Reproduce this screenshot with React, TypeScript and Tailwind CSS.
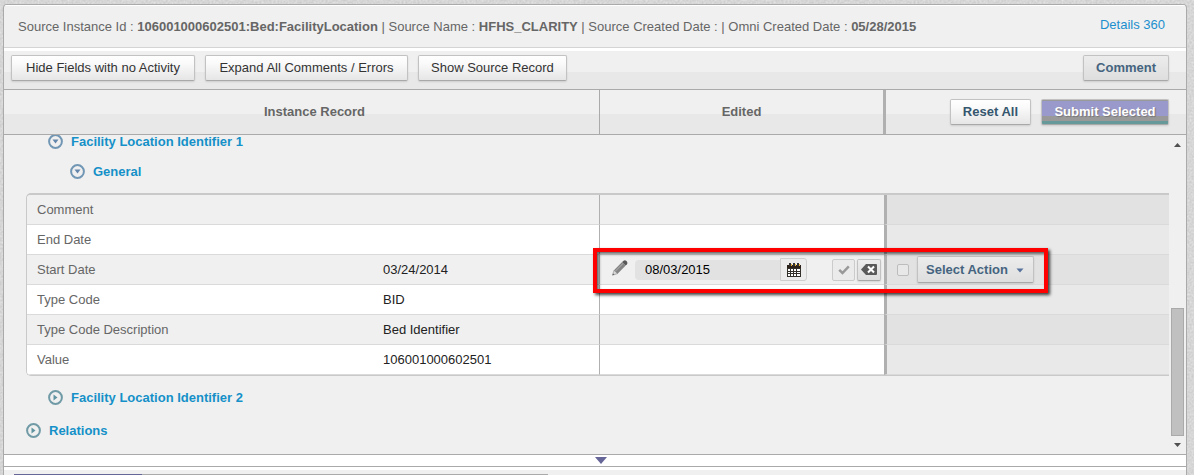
import React from 'react'
import clsx from 'clsx'

type Field = {
  label: string
  value?: string
  edited?: string
}

const fields: Field[] = [
  { label: 'Comment' },
  { label: 'End Date' },
  { label: 'Start Date', value: '03/24/2014', edited: '08/03/2015' },
  { label: 'Type Code', value: 'BID' },
  { label: 'Type Code Description', value: 'Bed Identifier' },
  { label: 'Value', value: '106001000602501' },
]

const raised =
  'rounded-[2px] border border-[#c2c2c2] border-b-[#a8a8a8] shadow-[0_1px_2px_rgba(0,0,0,0.12)]'
const whiteFace = 'bg-[linear-gradient(#ffffff_0%,#fafafa_30%,#e6e6e6_100%)]'
const grayFace = 'bg-[linear-gradient(#ececec,#dedede)]'
const barFace = 'bg-[linear-gradient(#f0f0f0_0%,#f0f0f0_54%,#e8e8e8_54%,#e8e8e8_100%)]'

function ToolbarButton({ children, className }: { children: React.ReactNode; className?: string }) {
  return (
    <button type="button" className={clsx('h-[26px] px-3 pb-0.5 text-[13px] leading-none whitespace-nowrap', raised, className)}>
      {children}
    </button>
  )
}

function SectionToggle({ label, open, className }: { label: string; open?: boolean; className?: string }) {
  return (
    <button
      type="button"
      aria-expanded={!!open}
      className={clsx('flex h-[30px] items-center gap-2 text-[13px] font-bold text-[#1590c8]', className)}
    >
      <svg width="15" height="15" viewBox="0 0 15 15" fill="none" className="mb-px">
        <circle cx="7.5" cy="7.5" r="6.4" stroke={open ? '#7297b5' : '#6f9aa6'} strokeWidth="2" />
        {open ? <path d="M4.5 5.5h6l-3 4z" fill="#6486ab" /> : <path d="M5.5 4.5v6l4-3z" fill="#5f93a0" />}
      </svg>
      {label}
    </button>
  )
}

function PencilIcon() {
  return (
    <svg width="16" height="16" viewBox="0 0 16 16">
      <path d="M0.5 15.2 2 10.2 5.6 13.6z" fill="#d8d8d8" stroke="#8a8a8a" strokeWidth="0.6" />
      <path d="M0.5 15.2 1.1 13.4 2.3 14.5z" fill="#555" />
      <path d="M2 10.2 10.1 2.1 13.7 5.6 5.6 13.7z" fill="#848484" />
      <path d="M3.3 11.2 11.3 3.2" stroke="#b4b4b4" strokeWidth="1" />
      <path d="M10.1 2.1 11.6 0.7Q13 -0.2 14.5 1.1 16 2.6 15 4.2L13.7 5.6z" fill="#595959" />
    </svg>
  )
}

function CalendarIcon() {
  return (
    <svg width="14" height="14" viewBox="0 0 14 14">
      <path d="M0 2h14v12H0z" fill="#33302c" />
      <path d="M0 2h14v3H0z" fill="#2b2118" />
      <path d="M2 0h2v3H2zM6 0h2v3H6zM10 0h2v3h-2z" fill="#333" />
      <path d="M4 1h1v2H4zM8 1h1v2H8zM12 1h1v2h-1z" fill="#e9b23a" />
      <path
        d="M1 6h2v2H1zM4 6h2v2H4zM7 6h2v2H7zM10 6h3v2h-3zM1 9h2v1H1zM4 9h2v1H4zM7 9h2v1H7zM10 9h3v1h-3zM1 11h2v2H1zM4 11h2v2H4zM7 11h2v2H7zM10 11h3v2h-3z"
        fill="#fff"
      />
    </svg>
  )
}

function EditedDate({ value }: { value: string }) {
  return (
    <div className="flex items-center pr-[3px] pl-3">
      <button type="button" aria-label="Edit start date" className="mr-[7px] -mt-1">
        <PencilIcon />
      </button>
      <input
        type="text"
        aria-label="Edited start date"
        defaultValue={value}
        className="h-5 min-w-0 flex-1 rounded-l bg-[#e2e2e2] pl-2.5 text-[13px] text-black outline-none"
      />
      <button
        type="button"
        aria-label="Pick a date"
        className="mr-[25px] flex h-[23px] w-[27px] items-center justify-center rounded-r-[3px] border border-[#cfcfcf] bg-[#ececec]"
      >
        <CalendarIcon />
      </button>
      <button
        type="button"
        aria-label="Accept"
        className="mr-0.5 flex h-[22px] w-[23px] items-center justify-center rounded-[2px] border border-[#cbcbcb] bg-[#ebebeb]"
      >
        <svg width="12" height="10" viewBox="0 0 12 10" fill="none">
          <path d="M1.2 4.8 4.5 8 10.8 1.4" stroke="#999" strokeWidth="2.5" />
        </svg>
      </button>
      <button
        type="button"
        aria-label="Clear"
        className={clsx('flex h-[22px] w-6 items-center justify-center', raised, grayFace)}
      >
        <svg width="16" height="11" viewBox="0 0 16 11">
          <path d="M0 5.5 5 0h10q1 0 1 1v9q0 1-1 1H5z" fill="#5a5a5a" />
          <path d="M7 2.5 13 8.5M13 2.5 7 8.5" stroke="#fff" strokeWidth="2.1" />
        </svg>
      </button>
      {/* highlight around the row's edit controls */}
      <div className="pointer-events-none absolute -top-[7px] -left-[7px] z-10 h-[45px] w-[455px] border-4 border-[#ff0000] shadow-[2px_2px_3px_rgba(0,0,0,0.75),inset_2px_2px_3px_rgba(0,0,0,0.6)]" />
    </div>
  )
}

function ActionControls() {
  return (
    <div className="flex items-center pl-2.5">
      <input
        type="checkbox"
        aria-label="Select start date change"
        className="mr-2 size-3 appearance-none rounded-[2px] border border-[#bdbdbd] bg-[#e8e8e8]"
      />
      <div className="relative">
        <select
          aria-label="Action"
          className={clsx('h-[27px] w-[117px] appearance-none pl-2 text-[13px] font-bold text-[#45647f]', raised, grayFace)}
        >
          <option>Select Action</option>
        </select>
        <svg className="pointer-events-none absolute top-3 right-2.5" width="8" height="5" viewBox="0 0 8 5">
          <path d="M0.5 0.5h7L4 4.5z" fill="#55719c" />
        </svg>
      </div>
    </div>
  )
}

function FieldTable() {
  return (
    <table className="ml-[22px] w-[calc(100%-22px)] table-fixed border-separate border-spacing-0 overflow-hidden rounded-l-[5px] border-t-2 border-b border-l border-[#c9c9c9] text-left text-[13px]">
      <colgroup>
        <col className="w-[346px]" />
        <col />
        <col className="w-[285px]" />
        <col className="w-[285px]" />
      </colgroup>
      <tbody>
        {fields.map((field, i) => {
          const line = 'border-b border-b-[#dadada]'
          return (
            <tr key={field.label} className={clsx('h-[30px]', i % 2 ? 'bg-white' : 'bg-[#f0f0f0]')}>
              <th scope="row" className={clsx('p-0 pl-2.5 font-normal text-[#666]', line)}>{field.label}</th>
              <td className={clsx('p-0 pl-2.5 text-[#222]', line)}>{field.value}</td>
              <td className={clsx('relative border-l border-l-[#b0b0b0] p-0', line)}>
                {field.edited && <EditedDate value={field.edited} />}
              </td>
              <td className={clsx('border-l-[3px] border-l-[#b0b0b0] p-0', i % 2 ? 'bg-[#e9e9e9]' : 'bg-[#e2e2e2]', line)}>
                {field.edited && <ActionControls />}
              </td>
            </tr>
          )
        })}
      </tbody>
    </table>
  )
}

function ScrollTrack() {
  return (
    <div className="flex w-[17px] shrink-0 flex-col items-center py-1.5">
      <svg width="7" height="4" viewBox="0 0 7 4" className="mt-0.5 shrink-0">
        <path d="M0 4h7L3.5 0z" fill="#505050" />
      </svg>
      <div className="flex-1" />
      <div className="h-32 w-[13px] border border-[#aaa] bg-[#c0c0c0]" />
      <svg width="7" height="4" viewBox="0 0 7 4" className="mt-[7px] mb-px shrink-0">
        <path d="M0 0h7L3.5 4z" fill="#505050" />
      </svg>
    </div>
  )
}

function PaperTexture() {
  return (
    <svg className="absolute inset-0 h-full w-full" aria-hidden="true">
      <filter id="paper" x="0" y="0" width="100%" height="100%" colorInterpolationFilters="sRGB">
        <feTurbulence type="fractalNoise" baseFrequency="0.5" numOctaves="3" />
        <feColorMatrix values="0.14 0 0 0 0.77  0.14 0 0 0 0.77  0.14 0 0 0 0.77  0 0 0 0 1" />
      </filter>
      <rect width="100%" height="100%" filter="url(#paper)" />
    </svg>
  )
}

export default function App() {
  return (
    <div className="relative min-h-screen bg-[#d6d6d6] pt-1 pr-[7px] pl-[3px] font-['Liberation_Sans',Arial,sans-serif] text-[13px] text-[#666]">
      <PaperTexture />
      <div className="relative overflow-hidden rounded-t-[4px] border border-b-0 border-[#aaa] bg-[#f0f0f0]">
        {/* Source details */}
        <header className="flex h-[43px] items-center justify-between border-t border-b border-t-white border-b-[#d4d4d4] pr-[21px] pl-3.5">
          <p className="whitespace-nowrap">
            Source Instance Id : <b>106001000602501:Bed:FacilityLocation</b> | Source Name : <b>HFHS_CLARITY</b> | Source
            Created Date : | Omni Created Date : <b>05/28/2015</b>
          </p>
          <a href="#details" className="pb-1 text-[#1b8fce]">Details 360</a>
        </header>

        {/* Toolbar */}
        <div className={clsx('flex h-[42px] items-center gap-2.5 border-t-[3px] border-b border-t-white border-b-[#aaa] pr-[17px] pb-1 pl-[7px]', barFace)}>
          <ToolbarButton className={clsx('min-w-[184px] text-[#333]', whiteFace)}>Hide Fields with no Activity</ToolbarButton>
          <ToolbarButton className={clsx('min-w-[203px] text-[#333]', whiteFace)}>Expand All Comments / Errors</ToolbarButton>
          <ToolbarButton className={clsx('text-[#333]', whiteFace)}>Show Source Record</ToolbarButton>
          <ToolbarButton className={clsx('ml-auto font-bold text-[#45647f]', grayFace)}>Comment</ToolbarButton>
        </div>

        {/* Column headings */}
        <div className={clsx('flex h-[45px] border-b border-[#aaa] font-bold', barFace)}>
          <div className="flex flex-1 items-center justify-center pl-[26px]">Instance Record</div>
          <div className="flex w-[284px] items-center justify-center border-l border-[#aaa]">Edited</div>
          <div className="flex w-[303px] items-center justify-end gap-2.5 border-l-[3px] border-[#b0b0b0] pr-[17px]">
            <ToolbarButton className={clsx('font-bold text-[#34566f]', whiteFace)}>Reset All</ToolbarButton>
            <ToolbarButton className="min-w-32 bg-[linear-gradient(#999_0%,#999_8%,#9999cc_8%,#9999cc_66%,#999_66%,#999_83%,#669999_83%)] bg-origin-border font-bold text-white [text-shadow:1px_1px_1px_#777]">
              Submit Selected
            </ToolbarButton>
          </div>
        </div>

        {/* Record body */}
        <div className="flex overflow-hidden">
          <div className="-mt-2 min-w-0 flex-1 pb-2">
            <SectionToggle open label="Facility Location Identifier 1" className="ml-11" />
            <SectionToggle open label="General" className="mb-1.5 ml-[66px]" />
            <FieldTable />
            <SectionToggle label="Facility Location Identifier 2" className="mt-[7px] mb-[3px] ml-11" />
            <SectionToggle label="Relations" className="ml-[22px]" />
          </div>
          <ScrollTrack />
        </div>

        {/* Splitter */}
        <button type="button" aria-label="Collapse panel" className="flex h-[13px] w-full items-center justify-center border-y border-[#aaa] bg-white pb-px pl-3">
          <svg width="12" height="7" viewBox="0 0 12 7">
            <path d="M0 0h12L6 7z" fill="#666699" />
          </svg>
        </button>
        <div className="h-[7px] border-t-[3px] border-white" />
        <div className="ml-2.5 flex h-px w-[534px]">
          <div className="w-32 bg-[#666699]" />
          <div className="flex-1 bg-[#aaa]" />
        </div>
      </div>
    </div>
  )
}
